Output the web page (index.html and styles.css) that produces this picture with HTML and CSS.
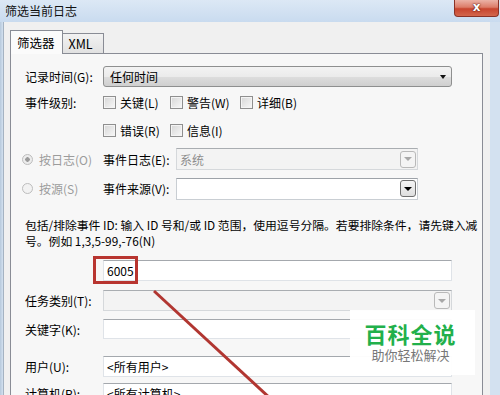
FILE: index.html
```html
<!DOCTYPE html>
<html lang="zh-CN">
<head>
    <meta charset="UTF-8">
    <meta name="viewport" content="width=device-width, initial-scale=1.0">
    <title>筛选当前日志</title>
    <link rel="stylesheet" href="styles.css">
</head>
<body>
    <div class="window">
        <div class="titlebar">
            <span class="title">筛选当前日志</span>
            <span class="close">x</span>
        </div>
        <div class="client">
            <div class="tabs">
                <span class="tab active">筛选器</span>
                <span class="tab">XML</span>
            </div>
            <div class="panel">
                <div class="row r-time">
                    <span class="label">记录时间(G):</span>
                    <div class="combo field"><span>任何时间</span><i class="arrow"></i></div>
                </div>

                <div class="row r-level">
                    <span class="label">事件级别:</span>
                    <div class="checks">
                        <span class="check"><i class="box"></i>关键(L)</span>
                        <span class="check"><i class="box"></i>警告(W)</span>
                        <span class="check"><i class="box"></i>详细(B)</span>
                    </div>
                </div>
                <div class="row r-level2">
                    <span class="label"></span>
                    <div class="checks">
                        <span class="check"><i class="box"></i>错误(R)</span>
                        <span class="check"><i class="box"></i>信息(I)</span>
                    </div>
                </div>

                <div class="row r-log">
                    <span class="radio on"><i class="dot"></i>按日志(O)</span>
                    <span class="label">事件日志(E):</span>
                    <div class="select disabled"><span>系统</span><i class="btn"><b></b></i></div>
                </div>
                <div class="row r-src">
                    <span class="radio"><i class="dot"></i>按源(S)</span>
                    <span class="label">事件来源(V):</span>
                    <div class="select"><span></span><i class="btn"><b></b></i></div>
                </div>

                <p class="desc">包括/排除事件 ID: 输入 ID 号和/或 ID 范围，使用逗号分隔。若要排除条件，请先键入减<br>号。例如 1,3,5-99,-76(N)</p>

                <div class="row r-id">
                    <span class="label"></span>
                    <div class="input field"><span class="typed">6005</span><i class="caret"></i></div>
                    <span class="highlight"></span>
                </div>
                <div class="row r-task">
                    <span class="label">任务类别(T):</span>
                    <div class="select disabled field"><span></span><i class="btn"><b></b></i></div>
                </div>
                <div class="row r-key">
                    <span class="label">关键字(K):</span>
                    <div class="input field"></div>
                </div>
                <div class="row r-user">
                    <span class="label">用户(U):</span>
                    <div class="input field"><span>&lt;所有用户&gt;</span></div>
                </div>
                <div class="row r-pc">
                    <span class="label">计算机(P):</span>
                    <div class="input field"><span>&lt;所有计算机&gt;</span></div>
                </div>
            </div>
        </div>

        <svg class="pointer" width="500" height="395" viewBox="0 0 500 395">
            <line x1="154" y1="291" x2="272" y2="400" stroke="#b13631" stroke-width="3"/>
        </svg>

        <div class="watermark">
            <div class="wm-title">百科全说</div>
            <div class="wm-sub">助你轻松解决</div>
        </div>
    </div>
</body>
</html>
```

FILE: styles.css
```css
* {
    margin: 0;
    padding: 0;
    box-sizing: border-box;
}

body {
    font-family: "Noto Sans CJK SC", "Liberation Sans", sans-serif;
    font-size: 12px;
    color: #000;
}

.window {
    width: 500px;
    height: 395px;
    overflow: hidden;
    position: relative;
    background: linear-gradient(90deg, #b7c9dc 0, #d3e1f0 3px, #d3e1f0 100%);
}

.titlebar {
    height: 22px;
    display: flex;
    align-items: center;
    justify-content: space-between;
    background: linear-gradient(#dce8f5, #c9dbef);
}

.title {
    padding-left: 5px;
    font-size: 12px;
    line-height: 22px;
    color: #111;
}

.close {
    align-self: flex-start;
    width: 45px;
    height: 17px;
    margin-right: 1px;
    border: 1px solid #8a3226;
    border-top: none;
    border-radius: 0 0 4px 4px;
    background: linear-gradient(#ebb2a6, #dc7c68 45%, #c8452e 55%, #d3664c);
    color: #fff;
    font-family: "DejaVu Sans", sans-serif;
    font-weight: bold;
    font-size: 12px;
    line-height: 14px;
    text-align: center;
    text-shadow: 0 0 2px #5a1a10, 0 0 1px #5a1a10;
}

.client {
    height: 373px;
    margin: 0 10px 0 3px;
    border-left: 1px solid #a5b3c2;
    background: #f0f0f0;
    padding-top: 8px;
}

.tabs {
    display: flex;
    align-items: flex-end;
    height: 23px;
    margin-left: 6px;
}

.tab {
    height: 20px;
    padding: 0 10px 0 6px;
    border: 1px solid #898c95;
    border-bottom: none;
    border-left: none;
    background: linear-gradient(#f2f2f2, #e1e1e1);
    line-height: 19px;
    font-size: 12.5px;
}

.tab.active {
    height: 24px;
    padding: 0 7px 0 6px;
    margin-bottom: -1px;
    border-left: 1px solid #898c95;
    background: #fbfbfb;
    line-height: 24px;
    position: relative;
    z-index: 1;
}

.panel {
    height: 400px;
    margin: 0 7px 0 6px;
    border: 1px solid #898c95;
    background: #f7f7f7;
    padding: 0 0 0 14px;
    display: flex;
    flex-direction: column;
}

.row {
    display: flex;
    align-items: center;
    position: relative;
}

.label {
    width: 78px;
    flex: none;
    white-space: nowrap;
}

.field {
    width: 349px;
}

.r-time { height: 21px; margin-top: 12px; }
.r-level { height: 20px; margin-top: 5px; }
.r-level2 { height: 20px; margin-top: 8px; }
.r-log { height: 22px; margin-top: 8px; }
.r-src { height: 21px; margin-top: 8px; }
.r-id { height: 21px; margin-top: 11px; }
.r-task { height: 21px; margin-top: 9px; }
.r-key { height: 20px; margin-top: 8px; }
.r-user { height: 21px; margin-top: 17px; }
.r-pc { height: 21px; margin-top: 6px; }

.combo {
    height: 21px;
    border: 1px solid #8e8f8f;
    border-radius: 3px;
    background: linear-gradient(#f3f3f3, #ebebeb 50%, #dddddd 51%, #cfcfcf);
    display: flex;
    align-items: center;
    justify-content: space-between;
    padding: 0 4px 0 6px;
}

.arrow {
    width: 0;
    height: 0;
    border-left: 3.5px solid transparent;
    border-right: 3.5px solid transparent;
    border-top: 4px solid #111;
    margin-right: 1px;
}

.checks {
    display: grid;
    grid-template-columns: 67px 70px auto;
    align-items: center;
}

.check {
    display: flex;
    align-items: center;
    gap: 4px;
    white-space: nowrap;
}

.box {
    width: 13px;
    height: 13px;
    border: 1px solid #8f8f8f;
    background: linear-gradient(135deg, #d6d6d6, #f8f8f8);
    box-shadow: inset 0 0 0 1px #f4f4f4;
}

.radio {
    width: 81px;
    margin-left: -3px;
    display: flex;
    align-items: center;
    gap: 6px;
    color: #9c9c9c;
    white-space: nowrap;
}

.radio .dot {
    width: 11px;
    height: 11px;
    border: 1px solid #bdbdbd;
    border-radius: 50%;
    background: #f2f2f2;
}

.radio.on .dot {
    background: radial-gradient(circle, #9a9a9a 0, #9a9a9a 2px, #ececec 2.5px);
}

.r-log .label,
.r-src .label {
    width: 73px;
}

.select {
    width: 242px;
    height: 22px;
    border: 1px solid #c9ced3;
    border-top-color: #9da2a8;
    background: #fff;
    display: flex;
    align-items: center;
    justify-content: space-between;
    padding: 0 1px 0 3px;
}

.select.disabled {
    background: #f3f3f3;
    border-color: #d5d8db;
    border-top-color: #a9adb1;
    color: #8d8d8d;
}

.select.field {
    width: 349px;
    height: 21px;
}

.btn {
    width: 16px;
    height: 17px;
    border: 1px solid #6f6f6f;
    border-radius: 3px;
    background: linear-gradient(#f5f5f5, #dedede);
    display: flex;
    align-items: center;
    justify-content: center;
}

.btn b {
    width: 0;
    height: 0;
    border-left: 4px solid transparent;
    border-right: 4px solid transparent;
    border-top: 4px solid #000;
}

.disabled .btn {
    border-color: #b9b9b9;
    background: #f4f4f4;
}

.disabled .btn b {
    border-top-color: #a8a8a8;
}

.input {
    height: 21px;
    border: 1px solid #dfe3e8;
    border-top-color: #a4a8ad;
    background: #fff;
    display: flex;
    align-items: center;
    padding-left: 3px;
}

.r-key .input {
    height: 20px;
}

.caret {
    width: 1px;
    height: 14px;
    background: #000;
    margin-left: 1px;
}

.desc {
    margin-top: 18px;
    line-height: 16px;
    font-size: 11.8px;
    white-space: nowrap;
}

.highlight {
    position: absolute;
    left: 68px;
    top: -4px;
    width: 45px;
    height: 28px;
    border: 3px solid #b83530;
}

.pointer {
    position: absolute;
    left: 0;
    top: 0;
}

.watermark {
    position: absolute;
    left: 350px;
    top: 310px;
    width: 125px;
    height: 65px;
    background: rgba(255, 255, 255, 0.96);
    text-align: center;
    padding-top: 12px;
}

.wm-title {
    font-size: 22px;
    font-weight: bold;
    color: #22b04b;
    line-height: 22px;
    letter-spacing: 1px;
    padding-right: 4px;
}

.wm-sub {
    margin-top: 3px;
    font-size: 13px;
    color: #777;
    line-height: 16px;
    padding-right: 4px;
}
```
